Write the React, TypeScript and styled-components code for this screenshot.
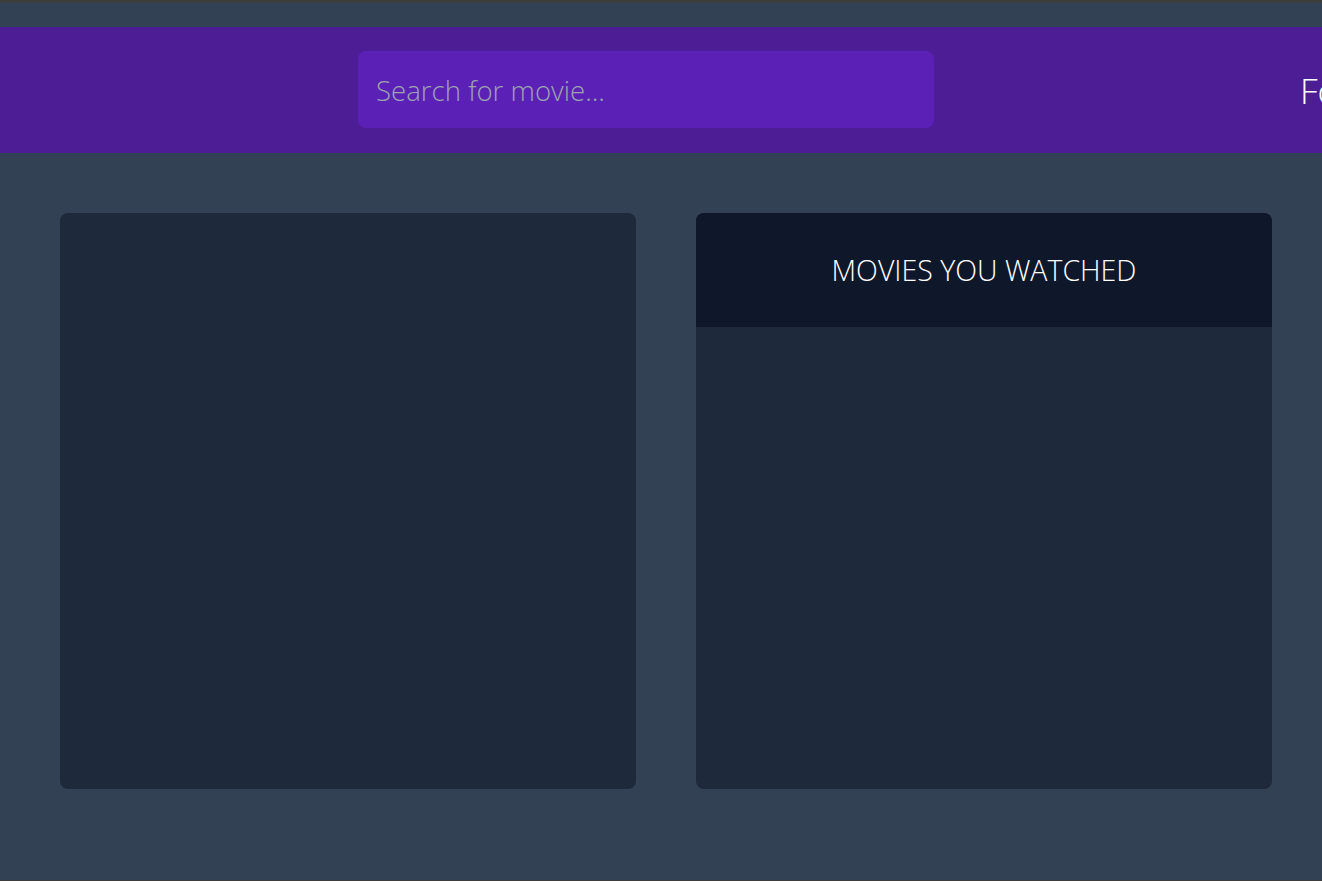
import React from "react";
import styled, { createGlobalStyle } from "styled-components";

const GlobalStyle = createGlobalStyle`
  html, body {
    margin: 0;
    padding: 0;
    background: #334155;
    overflow: hidden;
  }
  * { box-sizing: border-box; }
`;

const Frame = styled.div`
  width: 1322px;
  height: 881px;
  border-top: 3px solid #3d3d3d;
  border-bottom: 1px solid #3d3d3d;
  background: #334155;
  font-family: "Open Sans", "Noto Sans", sans-serif;
  font-weight: 300;
  overflow: hidden;
  padding-top: 24px;
`;

const Header = styled.header`
  height: 126px;
  background: #4c1d95;
  display: flex;
  align-items: center;
  padding-left: 358px;
  white-space: nowrap;
`;

const SearchInput = styled.input`
  width: 576px;
  height: 77px;
  flex: none;
  margin-top: -1px;
  border: none;
  outline: none;
  border-radius: 8px;
  background: #5b21b6;
  color: #e5e7eb;
  padding: 0 18px;
  font-family: "Open Sans", "Noto Sans", sans-serif;
  font-weight: 300;
  font-size: 27.6px;
  &::placeholder {
    color: #9ca3af;
  }
`;

const Stats = styled.div`
  margin-left: 366px;
  color: #ffffff;
  font-size: 35px;
  font-weight: 300;
  flex: none;
`;

const Main = styled.main`
  display: grid;
  grid-template-columns: 576px 576px;
  gap: 60px;
  padding: 60px 0 0 60px;
`;

const Card = styled.section`
  height: 576px;
  background: #1e293b;
  border-radius: 8px;
  overflow: hidden;
  display: flex;
  flex-direction: column;
`;

const CardHeader = styled.div`
  height: 114px;
  background: #0f172a;
  display: flex;
  align-items: center;
  justify-content: center;
  color: #ffffff;
  font-size: 28.5px;
  font-weight: 300;
`;

export default function App() {
  return (
    <>
      <GlobalStyle />
      <Frame>
        <Header>
          <SearchInput placeholder="Search for movie..." />
          <Stats>Found 0 results</Stats>
        </Header>
        <Main>
          <Card />
          <Card>
            <CardHeader>MOVIES YOU WATCHED</CardHeader>
          </Card>
        </Main>
      </Frame>
    </>
  );
}
